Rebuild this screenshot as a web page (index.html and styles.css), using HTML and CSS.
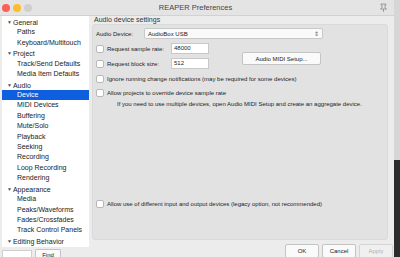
FILE: index.html
```html
<!DOCTYPE html>
<html lang="en">
<head>
    <meta charset="UTF-8">
    <title>REAPER Preferences</title>
    <link rel="stylesheet" href="styles.css">
</head>
<body>
    <div class="window">
        <div class="titlebar">
            <div class="lights">
                <span class="light red"></span>
                <span class="light yellow"></span>
                <span class="light grey"></span>
            </div>
            <div class="title">REAPER Preferences</div>
            <svg class="pin" width="9" height="9" viewBox="0 0 9 9">
                <path d="M2 1h5v1H6v3l1.5 1h-6L3 5V2H2z" fill="none" stroke="#8a8a8a" stroke-width="0.8"/>
                <path d="M4.5 6v3" stroke="#8a8a8a" stroke-width="0.8"/>
            </svg>
        </div>

        <div class="main">
            <div class="sidebar">
                <ul class="tree">
                    <li class="top"><span class="arrow">▼</span>General</li>
                    <li class="child">Paths</li>
                    <li class="child">Keyboard/Multitouch</li>
                    <li class="top"><span class="arrow">▼</span>Project</li>
                    <li class="child">Track/Send Defaults</li>
                    <li class="child">Media Item Defaults</li>
                    <li class="top"><span class="arrow">▼</span>Audio</li>
                    <li class="child selected">Device</li>
                    <li class="child">MIDI Devices</li>
                    <li class="child">Buffering</li>
                    <li class="child">Mute/Solo</li>
                    <li class="child">Playback</li>
                    <li class="child">Seeking</li>
                    <li class="child">Recording</li>
                    <li class="child">Loop Recording</li>
                    <li class="child">Rendering</li>
                    <li class="top"><span class="arrow">▼</span>Appearance</li>
                    <li class="child">Media</li>
                    <li class="child">Peaks/Waveforms</li>
                    <li class="child">Fades/Crossfades</li>
                    <li class="child">Track Control Panels</li>
                    <li class="top"><span class="arrow">▼</span>Editing Behavior</li>
                </ul>
                <div class="search">
                    <input class="search-box" type="text">
                    <button class="btn find">Find</button>
                </div>
            </div>

            <div class="content">
                <div class="group-title">Audio device settings</div>
                <div class="group">
                    <div class="device-row">
                        <span class="device-label">Audio Device:</span>
                        <div class="select">
                            <span>AudioBox USB</span>
                            <span class="updown">⇕</span>
                        </div>
                    </div>

                    <div class="rate-block">
                        <div class="rate-rows">
                            <div class="row">
                                <span class="check"></span>
                                <span class="rate-label">Request sample rate:</span>
                                <span class="field">48000</span>
                            </div>
                            <div class="row">
                                <span class="check"></span>
                                <span class="rate-label">Request block size:</span>
                                <span class="field">512</span>
                            </div>
                        </div>
                        <button class="btn midi">Audio MIDI Setup...</button>
                    </div>

                    <div class="row option">
                        <span class="check"></span>
                        <span>Ignore running change notifications (may be required for some devices)</span>
                    </div>
                    <div class="row option">
                        <span class="check"></span>
                        <span>Allow projects to override device sample rate</span>
                    </div>
                    <div class="info">If you need to use multiple devices, open Audio MIDI Setup and create an aggregate device.</div>

                    <div class="row option legacy">
                        <span class="check"></span>
                        <span>Allow use of different input and output devices (legacy option, not recommended)</span>
                    </div>
                </div>

                <div class="buttons">
                    <button class="btn dialog">OK</button>
                    <button class="btn dialog">Cancel</button>
                    <button class="btn dialog disabled">Apply</button>
                </div>
            </div>
        </div>
    </div>
</body>
</html>
```

FILE: styles.css
```css
body {
    margin: 0;
    width: 400px;
    height: 257px;
    overflow: hidden;
    font-family: "Liberation Sans", Arial, sans-serif;
    color: #222;
    background: linear-gradient(to bottom, #d6d6d6 0, #d6d6d6 160px, #2c2c2c 160px);
}
.window {
    width: 394px;
    height: 257px;
    background-color: #ececec;
}
.titlebar {
    height: 15px;
    display: flex;
    align-items: center;
    background-color: #e4e4e4;
    border-bottom: 1px solid #d2d2d2;
}
.lights {
    display: flex;
    gap: 3px;
    margin-left: 2px;
}
.light {
    width: 8px;
    height: 8px;
    border-radius: 50%;
}
.red { background-color: #fc5f57; }
.yellow { background-color: #fdbc2e; }
.grey { background-color: #cfcfcf; }
.title {
    flex: 1;
    text-align: center;
    font-size: 7.5px;
    color: #444;
    margin-right: 20px;
}
.pin {
    margin-right: 6px;
}

.main {
    display: flex;
}
.sidebar {
    width: 87px;
    margin-left: 2px;
}
.tree {
    list-style: none;
    margin: 0;
    padding: 1px 0 0 0;
    height: 230px;
    overflow: hidden;
    background-color: #fff;
    font-size: 7px;
}
.tree li {
    height: 10.43px;
    line-height: 10.43px;
    white-space: nowrap;
}
.top {
    padding-left: 5px;
}
.arrow {
    font-size: 5px;
    color: #555;
    margin-right: 1px;
    vertical-align: 1px;
}
.child {
    padding-left: 15px;
}
.selected {
    background-color: #0d5fe0;
    color: #fff;
}
.search {
    display: flex;
    align-items: flex-end;
    margin-top: 1px;
    height: 11px;
}
.search-box {
    width: 30px;
    height: 9px;
    margin: 0;
    padding: 0;
    border: 1px solid #cfcfcf;
    border-bottom: none;
    background-color: #fff;
    box-sizing: border-box;
}
.btn {
    font-family: "Liberation Sans", Arial, sans-serif;
    font-size: 6px;
    color: #222;
    background-color: #fafafa;
    border: 1px solid #c4c4c4;
    border-radius: 2px;
    padding: 0;
    margin: 0;
    box-sizing: border-box;
}
.find {
    width: 26px;
    height: 10px;
    margin-left: 3px;
    border-bottom: none;
    border-radius: 2px 2px 0 0;
}

.content {
    margin-left: 3px;
    width: 299px;
    font-size: 6px;
}
.group-title {
    height: 8px;
    line-height: 8px;
    font-size: 7px;
    padding-left: 2px;
    color: #333;
}
.group {
    height: 216px;
    box-sizing: border-box;
    background-color: #e2e2e2;
    border: 1px solid #dadada;
    border-radius: 3px;
    width: 296px;
    padding: 3px 0 0 3px;
}
.device-row {
    display: flex;
    align-items: center;
    height: 11px;
}
.device-label {
    width: 48px;
}
.select {
    width: 179px;
    height: 11px;
    box-sizing: border-box;
    background-color: #fafafa;
    border: 1px solid #c8c8c8;
    border-radius: 2px;
    display: flex;
    align-items: center;
    justify-content: space-between;
    padding: 0 3px 0 3px;
}
.updown {
    font-size: 6px;
    color: #666;
}
.rate-block {
    display: flex;
    margin-top: 4px;
}
.rate-rows {
    display: flex;
    flex-direction: column;
    gap: 4px;
}
.row {
    display: flex;
    align-items: center;
    height: 11px;
    white-space: nowrap;
}
.check {
    width: 8px;
    height: 8px;
    box-sizing: border-box;
    background-color: #fff;
    border: 1px solid #b8b8b8;
    border-radius: 2px;
    margin-right: 3px;
    flex-shrink: 0;
}
.rate-label {
    width: 64px;
}
.field {
    width: 38px;
    height: 11px;
    box-sizing: border-box;
    background-color: #fff;
    border: 1px solid #c8c8c8;
    padding-left: 2px;
    line-height: 9px;
}
.midi {
    width: 79px;
    height: 13px;
    margin-left: 33px;
    margin-top: 9px;
}
.option {
    height: 9px;
    margin-top: 5px;
}
.info {
    margin-top: 3px;
    padding-left: 21px;
    height: 9px;
    line-height: 9px;
}
.legacy {
    margin-top: 90px;
}
.buttons {
    display: flex;
    justify-content: flex-end;
    gap: 3px;
    margin-top: 4px;
    margin-right: -2px;
}
.dialog {
    width: 34px;
    height: 14px;
}
.disabled {
    color: #b0b0b0;
    background-color: #f0f0f0;
    border-color: #d4d4d4;
}
```
